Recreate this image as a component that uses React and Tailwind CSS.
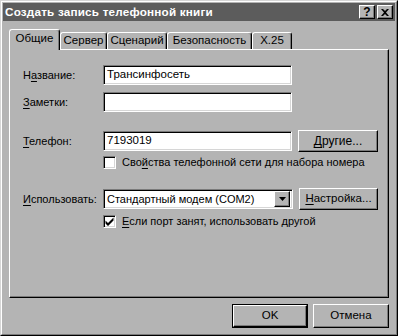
import React from "react";

const F = { fontFamily: '"Liberation Sans", Arial, sans-serif' };

function U({ children }) {
  return <span className="underline underline-offset-[2px]">{children}</span>;
}

function Input({ value, className = "" }) {
  return (
    <div
      className={
        "h-[20px] bg-white border border-t-[#7a7a7a] border-l-[#7a7a7a] border-b-white border-r-white shadow-[inset_1px_1px_0_#000,inset_-1px_-1px_0_#d6d6d6] flex items-center px-[3px] text-[11.5px] text-black " +
        className
      }
    >
      {value}
    </div>
  );
}

function Button({ children, className = "", def = false }) {
  const inner = (
    <div className="w-full h-full bg-[#b4b4b4] border border-t-white border-l-white border-b-black border-r-black shadow-[inset_-1px_-1px_0_#7a7a7a] flex items-center justify-center text-[11.5px] text-black">
      {children}
    </div>
  );
  if (def) {
    return <div className={"border border-black " + className}>{inner}</div>;
  }
  return <div className={className}>{inner}</div>;
}

function Check({ checked }) {
  return (
    <div className="w-[13px] h-[13px] bg-white border border-t-[#7a7a7a] border-l-[#7a7a7a] border-b-white border-r-white shadow-[inset_1px_1px_0_#000,inset_-1px_-1px_0_#d6d6d6] flex items-center justify-center shrink-0">
      {checked && (
        <svg width="9" height="9" viewBox="0 0 9 9">
          <path d="M0.5 3.5 L3 6 L8.5 0.5 L8.5 3.5 L3 9 L0.5 6.5 Z" fill="#000" />
        </svg>
      )}
    </div>
  );
}

function Tab({ children, active, w }) {
  return (
    <div
      className={
        "bg-[#b4b4b4] border-l border-t border-r border-l-white border-t-white border-r-black shadow-[inset_-1px_0_0_#7a7a7a] rounded-t-[3px] flex items-center justify-center text-[11.5px] text-black " +
        (active ? "h-[21px] relative z-10 -mb-px pb-[2px]" : "h-[17px]")
      }
      style={{ width: w }}
    >
      {children}
    </div>
  );
}

export default function App() {
  return (
    <div style={F} className="w-[398px] h-[336px] bg-[#b4b4b4] border border-t-[#d6d6d6] border-l-[#d6d6d6] border-b-black border-r-black">
      <div className="w-full h-full border border-t-white border-l-white border-b-[#7a7a7a] border-r-[#7a7a7a] p-px flex flex-col">
        {/* Title bar */}
        <div className="h-[18px] bg-[#5c5c5c] flex items-center pl-[2px] pr-[2px]">
          <span className="text-white font-bold text-[11.7px] tracking-[0.2px] flex-1">
            Создать запись телефонной книги
          </span>
          <div className="flex gap-[2px]">
            <div className="w-[16px] h-[14px] bg-[#b4b4b4] border border-t-white border-l-white border-b-black border-r-black shadow-[inset_-1px_-1px_0_#7a7a7a] flex items-center justify-center text-[12px] font-bold leading-none text-black">
              ?
            </div>
            <div className="w-[16px] h-[14px] bg-[#b4b4b4] border border-t-white border-l-white border-b-black border-r-black shadow-[inset_-1px_-1px_0_#7a7a7a] flex items-center justify-center">
              <svg width="8" height="7" viewBox="0 0 8 7">
                <path d="M0 0h2l2 2 2-2h2L5 3.5 8 7H6L4 5 2 7H0l3-3.5z" fill="#000" />
              </svg>
            </div>
          </div>
        </div>

        {/* Body */}
        <div className="flex-1 flex flex-col pl-[6px] pr-[6px] pt-[8px]">
          <div className="flex items-end">
            <Tab active w={51}>Общие</Tab>
            <Tab w={47}>Сервер</Tab>
            <Tab w={60}>Сценарий</Tab>
            <Tab w={85}>Безопасность</Tab>
            <Tab w={40}>X.25</Tab>
          </div>
          <div className="h-[249px] border border-t-white border-l-white border-b-black border-r-black shadow-[inset_-1px_-1px_0_#7a7a7a] text-[11px] text-black pl-[13px] pt-[15px]">
            <div className="flex items-center h-[20px]">
              <div className="w-[80px]">
                Н<U>а</U>звание:
              </div>
              <Input value="Трансинфосеть" className="w-[189px]" />
            </div>
            <div className="flex items-center h-[20px] mt-[7px]">
              <div className="w-[80px]">
                <U>З</U>аметки:
              </div>
              <Input value="" className="w-[189px]" />
            </div>
            <div className="flex items-center h-[22px] mt-[18px]">
              <div className="w-[80px]">
                <U>Т</U>елефон:
              </div>
              <Input value="7193019" className="w-[189px]" />
              <Button className="w-[80px] h-[22px] ml-[6px]">
                <span className="text-[12px]">
                  <U>Д</U>ругие...
                </span>
              </Button>
            </div>
            <div className="flex items-center h-[13px] mt-[4px] ml-[80px] gap-[6px]">
              <Check />
              <span>
                Сво<U>й</U>ства телефонной сети для набора номера
              </span>
            </div>
            <div className="flex items-center h-[22px] mt-[19px]">
              <div className="w-[80px]">
                <U>И</U>спользовать:
              </div>
              <div className="w-[190px] h-[20px] bg-white border border-t-[#7a7a7a] border-l-[#7a7a7a] border-b-white border-r-white shadow-[inset_1px_1px_0_#000,inset_-1px_-1px_0_#d6d6d6] flex items-center pl-[3px] pr-[2px] py-[2px] text-[11px]">
                <span className="flex-1">Стандартный модем (COM2)</span>
                <div className="w-[16px] h-[16px] bg-[#b4b4b4] border border-t-white border-l-white border-b-black border-r-black shadow-[inset_-1px_-1px_0_#7a7a7a] flex items-center justify-center">
                  <svg width="7" height="4" viewBox="0 0 7 4">
                    <path d="M0 0h7L3.5 4z" fill="#000" />
                  </svg>
                </div>
              </div>
              <Button className="w-[79px] h-[22px] ml-[6px]">
                <span>
                  <U>Н</U>астройка...
                </span>
              </Button>
            </div>
            <div className="flex items-center h-[13px] mt-[5px] ml-[80px] gap-[6px]">
              <Check checked />
              <span>
                <U>Е</U>сли порт занят, использовать другой
              </span>
            </div>
          </div>
          <div className="flex justify-end gap-[5px] mt-[6px] pr-[0px]">
            <Button def className="w-[76px] h-[24px]">
              OK
            </Button>
            <Button className="w-[76px] h-[24px]">Отмена</Button>
          </div>
        </div>
      </div>
    </div>
  );
}
